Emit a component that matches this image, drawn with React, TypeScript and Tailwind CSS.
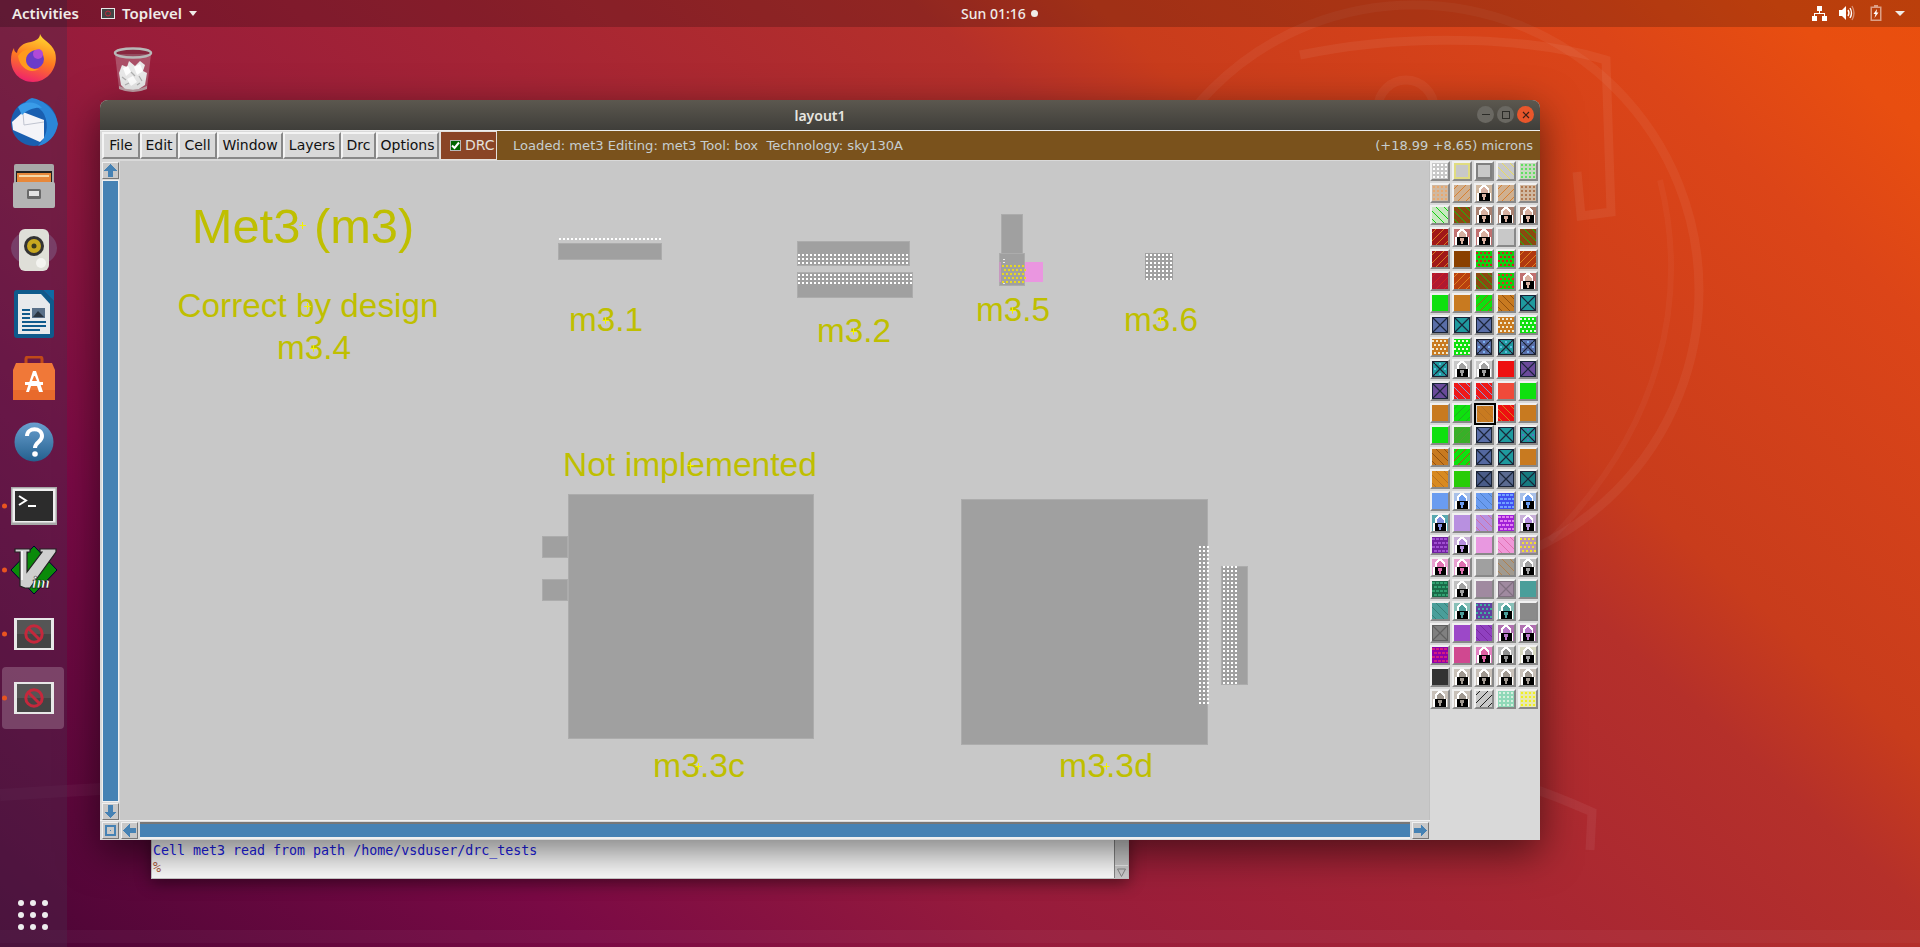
import type { ReactNode } from "react";

const SANS = "font-['Noto_Sans',sans-serif]";
const TK = "font-['DejaVu_Sans',sans-serif]";

type Pat = "plain" | "dots" | "stag" | "diag" | "back" | "x" | "xdots" | "lock" | "outline" | "weave";
type Cell = { bg: string; pat?: Pat; fg?: string; selected?: boolean };

const c = (bg: string, pat: Pat = "plain", fg = "#1a2438"): Cell => ({ bg, pat, fg });
const lock = (bg: string, fg = "#d8b0a0") => c(bg, "lock", fg);

const SLATE = "#5a6ea8";
const TEAL = "#1f9a9e";
const ORANGE = "#c87a20";
const GREEN = "#0ee00e";

const layers: Cell[][] = [
  [c("#c8c8c8", "dots", "#fff"), c("#c8c8c8", "outline", "#e0dc80"), c("#c8c8c8", "outline", "#808080"), c("#c8c8c8", "back", "#e8dc60"), c("#c8d8c0", "dots", "#60e060")],
  [c("#d0b8a0", "dots", "#e8a870"), c("#d0b090", "diag", "#d88030"), lock("#d0b8a0"), c("#d0b090", "diag", "#d88030"), c("#d0b8a0", "dots", "#b07850")],
  [c("#c8e8c0", "back", "#10d010"), c("#8a4a10", "back", "#10c010"), lock("#a88070"), lock("#a88070"), lock("#a88070")],
  [c("#a01818", "diag", "#d87820"), lock("#c07070"), lock("#c07070"), c("#c8c8c8"), c("#8a4a10", "back", "#10c010")],
  [c("#a01818", "diag", "#d87820"), c("#8a4000"), c("#10d010", "stag", "#d02020"), c("#10d010", "stag", "#d02020"), c("#b03810", "diag", "#e08020")],
  [c("#b01830", "diag", "#d02020"), c("#b84010", "diag", "#e08020"), c("#8a4a10", "back", "#10c010"), c("#10d010", "stag", "#e03020"), lock("#c07070")],
  [c(GREEN), c(ORANGE), c(GREEN, "diag", "#a06020"), c(ORANGE, "back", "#905010"), c(TEAL, "x")],
  [c(SLATE, "x"), c(TEAL, "x"), c(SLATE, "x"), c(ORANGE, "stag", "#f0e8d0"), c(GREEN, "stag", "#e0f8e0")],
  [c(ORANGE, "stag", "#f0e8d0"), c(GREEN, "stag", "#f0f8e0"), c(SLATE, "xdots", "#7ab0f0"), c(TEAL, "xdots", "#60b8e0"), c(SLATE, "xdots", "#7ab0f0")],
  [c(TEAL, "xdots", "#60b8e0"), lock("#c8c8c8", "#a0a0a0"), lock("#c8c8c8", "#a0a0a0"), c("#ee1010"), c("#6a4a9a", "x")],
  [c("#6a4a9a", "x"), c("#ee1818", "back", "#80a0e0"), c("#ee1818", "back", "#80a0e0"), c("#f04a3a"), c(GREEN)],
  [c(ORANGE, "plain"), c(GREEN, "diag", "#20b020"), { ...c(ORANGE, "back", "#b87020"), selected: true }, c("#ee1010", "back", "#d88020"), c(ORANGE)],
  [c(GREEN), c("#38b028", "diag", "#50a030"), c(SLATE, "x"), c(TEAL, "x"), c(TEAL, "xdots", "#5a70c0")],
  [c(ORANGE, "back", "#905010"), c(GREEN, "diag", "#c04020"), c("#5468a0", "x"), c(TEAL, "x"), c(ORANGE)],
  [c("#d88a20", "back", "#b87020"), c("#28cc08"), c("#4a5c88", "x"), c("#5a6a90", "x"), c("#167a80", "x")],
  [c("#6a9cf0"), lock("#a8c0e8", "#6a9cf0"), c("#6a9cf0", "back", "#5080c8"), c("#4050f0", "weave", "#70a0ff"), lock("#a8c0e8", "#6a9cf0")],
  [lock("#58a8b0", "#8090e0"), c("#b890e0"), c("#b890e0", "back", "#d070a0"), c("#a020d8", "weave", "#e080f0"), lock("#c8b0d8", "#b890e0")],
  [c("#7020a0", "weave", "#a050d0"), lock("#c8b0d8", "#b890e0"), c("#e898e0"), c("#f098d8", "back", "#e070b0"), c("#b898b0", "stag", "#f0e030")],
  [lock("#e8a0d0", "#e070b0"), lock("#e8a0d0", "#e070b0"), c("#a0a0a0"), c("#a09a90", "back", "#b08050"), lock("#c0c0c0", "#a0a0a0")],
  [c("#1a6a48", "weave", "#30a070"), lock("#c0c0c0", "#a0a0a0"), c("#a08aa0"), c("#a08aa0", "x", "#807080"), c("#4a9e9a")],
  [c("#4a9e9a", "back", "#388078"), lock("#88c0b8", "#4a9e9a"), c("#6040a0", "stag", "#40b0a0"), lock("#88c0b8", "#4a9e9a"), c("#8a8a8a")],
  [c("#808080", "x", "#606060"), c("#9c48c8"), c("#9040c0", "back", "#7a2aa0"), lock("#b070b0", "#b878c8"), lock("#b070b0", "#b878c8")],
  [c("#9000a8", "weave", "#d02080"), c("#d04890"), lock("#e080c0", "#e060a0"), lock("#b8b8b8", "#909090"), lock("#d8d8c0", "#a0a0a0")],
  [c("#333333"), lock("#c8c0b8", "#a09890"), lock("#c8c0b8", "#a09890"), lock("#c8c0b8", "#a09890"), lock("#c8c0b8", "#a09890")],
  [lock("#c8c0b8", "#a09890"), lock("#c8c0b8", "#a09890"), c("#c8c8c8", "diag", "#202020"), c("#90d8b8", "dots", "#d8f0e0"), c("#e8e8b0", "dots", "#f0f020")],
];

function LayerGlyph({ cell, id }: { cell: Cell; id: string }) {
  const fg = cell.fg ?? "#000";
  const pat = cell.pat ?? "plain";
  return (
    <svg width="16" height="16" viewBox="0 0 16 16" shapeRendering="crispEdges" className="block">
      <rect width="16" height="16" fill={cell.bg} />
      {pat === "dots" &&
        [1, 5, 9, 13].flatMap((y) =>
          [1, 5, 9, 13].map((x) => <rect key={`${id}${x}-${y}`} x={x} y={y} width="2" height="2" fill={fg} />),
        )}
      {pat === "stag" &&
        [1, 5, 9, 13].flatMap((y) =>
          [0, 4, 8, 12].map((x) => (
            <rect key={`${id}${x}-${y}`} x={x + (y % 8 === 1 ? 0 : 2)} y={y} width="2" height="2" fill={fg} />
          )),
        )}
      {pat === "weave" &&
        [0, 4, 8, 12].flatMap((y) =>
          [0, 4, 8, 12].map((x) => (
            <rect key={`${id}${x}-${y}`} x={x + (y % 8 === 0 ? 0 : 2)} y={y + 1} width="3" height="2" fill={fg} />
          )),
        )}
      {pat === "diag" && (
        <g shapeRendering="auto" stroke={fg} strokeWidth="1">
          <path d="M-2 6 L6 -2 M-2 14 L14 -2 M4 16 L18 2 M12 16 L18 10" />
        </g>
      )}
      {pat === "back" && (
        <g shapeRendering="auto" stroke={fg} strokeWidth="1">
          <path d="M-2 10 L6 18 M-2 2 L14 18 M4 0 L18 14 M12 0 L18 6" />
        </g>
      )}
      {(pat === "x" || pat === "xdots") && (
        <g>
          {pat === "xdots" &&
            [2, 7, 12].flatMap((y) =>
              [2, 7, 12].map((x) => <rect key={`${id}${x}-${y}`} x={x} y={y} width="2" height="2" fill={fg} />),
            )}
          <path d="M0.5 0.5 L15.5 15.5 M15.5 0.5 L0.5 15.5" stroke={pat === "x" ? fg : "#1a2030"} strokeWidth="1.2" shapeRendering="auto" />
          <rect x="0.5" y="0.5" width="15" height="15" fill="none" stroke={pat === "x" ? fg : "#1a2030"} />
        </g>
      )}
      {pat === "outline" && <rect x="1" y="1" width="14" height="14" fill="none" stroke={fg} strokeWidth="2" />}
      {pat === "lock" && (
        <g>
          <path d="M1 16 V8 H3 V4 L6 0 H10 L13 4 V8 H15 V16 Z" fill="#fff" />
          <path d="M4.5 8 V5 L7 2 H9 L11.5 5 V8 Z" fill={fg} />
          <rect x="2.5" y="8" width="11" height="8" fill="#000" />
          <rect x="6" y="9" width="4" height="3" fill={fg} />
          <rect x="7" y="12" width="2" height="3" fill={fg} />
        </g>
      )}
    </svg>
  );
}

function LayerCell({ cell, id }: { cell: Cell; id: string }) {
  if (cell.selected) {
    return (
      <div className="w-[22px] h-[22px] flex items-center justify-center">
        <div className="border-2 border-black p-px">
          <LayerGlyph cell={cell} id={id} />
        </div>
      </div>
    );
  }
  return (
    <div className="w-[22px] h-[22px] flex items-start justify-start">
      <div className="border-2 border-t-[#f0f0f0] border-l-[#f0f0f0] border-r-[#888888] border-b-[#888888]">
        <LayerGlyph cell={cell} id={id} />
      </div>
    </div>
  );
}

const MENUS = [
  { label: "File", w: "w-[38px]" },
  { label: "Edit", w: "w-[38px]" },
  { label: "Cell", w: "w-[39px]" },
  { label: "Window", w: "w-[66px]" },
  { label: "Layers", w: "w-[58px]" },
  { label: "Drc", w: "w-[35px]" },
  { label: "Options", w: "w-[63px]" },
];

function TkButton({ children, className }: { children: ReactNode; className: string }) {
  return (
    <div className={`h-[27px] ${className} flex items-center justify-center text-[14px] text-[#111] bg-[#d9d9d9] border-2 border-t-[#f4f4f4] border-l-[#f4f4f4] border-r-[#888888] border-b-[#888888] ${TK}`}>
      {children}
    </div>
  );
}

function ScrollBtn({ dir }: { dir: "up" | "down" | "left" | "right" | "box" }) {
  const d = {
    up: "M8 1 L15 8 H11 V15 H5 V8 H1 Z",
    down: "M8 15 L1 8 H5 V1 H11 V8 H15 Z",
    left: "M1 8 L8 1 V5 H15 V11 H8 V15 Z",
    right: "M15 8 L8 1 V5 H1 V11 H8 V15 Z",
    box: "",
  }[dir];
  return (
    <div className="w-[17px] h-[17px] shrink-0 flex items-center justify-center bg-[#c8c8c8] border border-t-[#f0f0f0] border-l-[#f0f0f0] border-r-[#777777] border-b-[#777777]">
      <svg width="15" height="15" viewBox="0 0 16 16" shapeRendering="crispEdges">
        {dir === "box" ? (
          <path fillRule="evenodd" d="M2 2 H14 V14 H2 Z M4 4 V12 H12 V4 Z M7 7 H9 V9 H7 Z" fill="#4682b4" />
        ) : (
          <path d={d} fill="#4682b4" />
        )}
      </svg>
    </div>
  );
}

function Tag({ x, y, size = 33.4, children }: { x: number; y: number; size?: number; children: string }) {
  return (
    <div
      className="absolute -translate-x-1/2 -translate-y-1/2 whitespace-nowrap text-[#bfbf00] font-['Liberation_Sans',sans-serif] leading-none"
      style={{ left: x, top: y, fontSize: size }}
    >
      {children}
      <svg className="absolute left-1/2 top-1/2 -translate-x-1/2 -translate-y-1/2" width="7" height="7" viewBox="0 0 7 7" shapeRendering="crispEdges">
        <path d="M3.5 0 V7 M0 3.5 H7" stroke="#f4f400" />
      </svg>
    </div>
  );
}

// via dots, first dot at x,y, 4px pitch
function Dots({ x, y, w, h, fill = "#ffffff", shift = 0 }: { x: number; y: number; w: number; h: number; fill?: string; shift?: number }) {
  const out: ReactNode[] = [];
  for (let j = 0; j < h; j += 4) {
    const off = shift && (j / 4) % 2 === 1 ? shift : 0;
    for (let i = 0; i < w; i += 4) {
      out.push(<rect key={`${i}-${j}`} x={x + i + off} y={y + j} width={2} height={2} fill={fill} />);
    }
  }
  return <>{out}</>;
}

function Metal({ x, y, w, h }: { x: number; y: number; w: number; h: number }) {
  return <rect x={x + 0.5} y={y + 0.5} width={w - 1} height={h - 1} fill="#a0a0a0" stroke="#acacac" />;
}

// drawn in screen coordinates, moved back by the canvas origin
function LayoutDrawing() {
  return (
    <svg className="absolute inset-0" width="1309" height="660" shapeRendering="crispEdges">
      <g transform="translate(-120 -161)">
        <Metal x={558} y={243} w={104} h={17} />
        <Dots x={559} y={238} w={103} h={4} />

        <Metal x={797} y={241} w={113} h={25} />
        <Metal x={797} y={272} w={116} h={26} />
        <Dots x={798} y={254} w={112} h={12} />
        <Dots x={798} y={274} w={115} h={12} />

        <Metal x={1001} y={214} w={22} h={40} />
        <Metal x={999} y={253} w={26} h={33} />
        <rect x={999} y={262} width={2} height={20} fill="#c898c0" />
        <rect x={1025} y={262} width={18} height={20} fill="#ea96e0" />
        <Dots x={1002} y={265} w={21} h={20} fill="#e8d820" shift={2} />
        <rect x={1003} y={259} width={2} height={1} fill="#e8e8e8" />
        <rect x={1003} y={262} width={2} height={1} fill="#e8e8e8" />
        <rect x={1003} y={283} width={2} height={1} fill="#e8e8e8" />

        <rect x={1145} y={253} width={28} height={27} fill="#a0a0a0" />
        <Dots x={1146} y={254} w={27} h={26} />

        <Metal x={568} y={494} w={246} h={245} />
        <Metal x={542} y={536} w={26} h={22} />
        <Metal x={542} y={579} w={26} h={22} />

        <Metal x={961} y={499} w={247} h={246} />
        <Dots x={1199} y={546} w={9} h={158} />
        <Metal x={1221} y={566} w={27} h={119} />
        <Dots x={1223} y={566} w={14} h={118} />
      </g>
    </svg>
  );
}

function DockIcon({ children, active, dot }: { children: ReactNode; active?: boolean; dot?: boolean }) {
  return (
    <div className="relative h-16 w-full flex items-center justify-center">
      {active && <div className="absolute left-[2px] right-[3px] top-px bottom-px rounded-[4px] bg-white/20" />}
      {dot && <div className="absolute left-[2px] top-1/2 -translate-y-1/2 w-[5px] h-[5px] rounded-full bg-[#e95420]" />}
      <div className="relative">{children}</div>
    </div>
  );
}

function WishIcon() {
  return (
    <svg width="40" height="32" viewBox="0 0 40 32">
      <rect width="40" height="32" fill="#e8e8e8" />
      <rect x="3" y="2" width="34" height="28" fill="#444" />
      <rect x="3" y="2" width="34" height="14" fill="#555" />
      <circle cx="20" cy="16" r="8.2" fill="none" stroke="#c4283c" strokeWidth="3" />
      <path d="M14.5 10.5 L25.5 21.5" stroke="#c4283c" strokeWidth="3" />
    </svg>
  );
}

function Dock() {
  return (
    <div className="absolute left-0 top-0 bottom-0 w-[67px] pt-[26px] flex flex-col bg-[#4a2a4a]/40">
      <DockIcon>
        <svg width="46" height="48" viewBox="0 0 46 48">
          <defs>
            <linearGradient id="ffa" x1="0.6" y1="0" x2="0.3" y2="1">
              <stop offset="0" stopColor="#ffd52e" />
              <stop offset="0.5" stopColor="#ff7a20" />
              <stop offset="1" stopColor="#ee1e70" />
            </linearGradient>
          </defs>
          <path d="M29 0 C31 6 40 8 44 18 C48 32 38 48 22 48 C8 48 0 37 0 26 C0 21 1 17 3 14 C3 17 4 18 6 19 C7 13 12 9 20 8 C24 7 29 5 29 0 Z" fill="url(#ffa)" />
          <circle cx="23" cy="25" r="10" fill="#6a3cc8" />
          <circle cx="27" cy="20" r="5" fill="#b04ad8" />
          <path d="M7 22 C10 16 20 13 28 15 C22 16 15 19 15 26 C15 32 21 36 28 35 C20 40 9 35 7 22 Z" fill="#ff9a1e" />
        </svg>
      </DockIcon>
      <DockIcon>
        <svg width="48" height="48" viewBox="0 0 48 48">
          <circle cx="24" cy="25" r="23" fill="#1a5fb0" />
          <path d="M22 0 C34 2 46 12 48 26 C46 38 38 46 28 48 C36 40 40 28 34 16 C30 9 24 7 14 7 C16 3 18 1 22 0 Z" fill="#2b86d8" />
          <path d="M2 24 L13 14 L34 22 L34 40 L30 44 L3 32 Z" fill="#f4f4f8" />
          <path d="M13 15 L14 27 L34 24" fill="none" stroke="#c0c4d0" strokeWidth="1" />
          <path d="M8 9 C14 3 26 3 32 10 C26 9 18 11 12 17 Z" fill="#3a9ce8" />
        </svg>
      </DockIcon>
      <DockIcon>
        <svg width="42" height="44" viewBox="0 0 42 44">
          <rect x="1" y="0" width="40" height="44" rx="2" fill="#a8a8a8" />
          <rect x="3" y="7" width="36" height="11" fill="#222" />
          <rect x="4" y="9" width="34" height="9" fill="#e8883a" />
          <rect x="6" y="11" width="30" height="2" fill="#f6d8a8" />
          <rect x="0" y="18" width="42" height="26" rx="2" fill="#b4b4b4" />
          <rect x="14" y="25" width="14" height="10" rx="1.5" fill="#6a6a6a" />
          <rect x="16" y="27" width="10" height="5" fill="#e4e4e4" />
        </svg>
      </DockIcon>
      <DockIcon>
        <svg width="48" height="44" viewBox="0 0 48 44">
          <ellipse cx="24" cy="20" rx="23" ry="18" fill="#8a80a8" opacity="0.35" />
          <rect x="9" y="1" width="30" height="42" rx="6" fill="#dfdfd8" />
          <circle cx="24" cy="18" r="10" fill="#333" />
          <circle cx="24" cy="18" r="7" fill="#c8a820" />
          <circle cx="24" cy="18" r="2.5" fill="#3a3a20" />
          <circle cx="31" cy="35" r="5" fill="#f4f4f0" />
        </svg>
      </DockIcon>
      <DockIcon>
        <svg width="40" height="48" viewBox="0 0 40 48">
          <path d="M3 0 H29 L40 11 V45 Q40 48 37 48 H3 Q0 48 0 45 V3 Q0 0 3 0 Z" fill="#0f5a8c" />
          <path d="M4 4 H27 L36 14 V44 H4 Z" fill="#e8eaec" />
          <path d="M29 0 H40 V11 Z" fill="#0f6aa4" />
          <rect x="8" y="19" width="8" height="2" fill="#0f5a8c" />
          <rect x="8" y="23" width="8" height="2" fill="#0f5a8c" />
          <rect x="8" y="27" width="8" height="2" fill="#0f5a8c" />
          <rect x="18" y="18" width="13" height="10" fill="#5a7088" />
          <path d="M19 27 L24 21 L30 27 Z" fill="#2a3440" />
          <rect x="8" y="31" width="24" height="2" fill="#0f5a8c" />
          <rect x="8" y="35" width="24" height="2" fill="#0f5a8c" />
          <rect x="8" y="39" width="18" height="2" fill="#0f5a8c" />
        </svg>
      </DockIcon>
      <DockIcon>
        <svg width="42" height="44" viewBox="0 0 42 44">
          <path d="M13 7 V3 Q13 1 15 1 H27 Q29 1 29 3 V7" fill="none" stroke="#c04a18" strokeWidth="3" />
          <path d="M3 7 H39 L42 14 V44 H0 V14 Z" fill="#f07838" />
          <path d="M0 34 H42 V44 H0 Z" fill="#e86a2c" />
          <path d="M13 36 L20 15 H23 L30 36 H26 L24 30 H18 L16 36 Z M19 25 H24 L22 20 H21 Z" fill="#fff" fillRule="evenodd" />
          <rect x="12" y="26" width="18" height="3" fill="#fff" />
        </svg>
      </DockIcon>
      <DockIcon>
        <svg width="40" height="40" viewBox="0 0 40 40">
          <defs>
            <linearGradient id="hlp" x1="0" y1="0" x2="0" y2="1">
              <stop offset="0" stopColor="#6aa0d0" />
              <stop offset="1" stopColor="#24608e" />
            </linearGradient>
          </defs>
          <circle cx="20" cy="20" r="19.5" fill="url(#hlp)" />
          <path d="M13 14 C13 5 28 5 28 14 C28 20 21 20 21 26" fill="none" stroke="#fff" strokeWidth="4" />
          <circle cx="21" cy="32" r="2.8" fill="#fff" />
        </svg>
      </DockIcon>
      <DockIcon dot>
        <svg width="46" height="38" viewBox="0 0 46 38">
          <rect width="46" height="38" fill="#a8a8a8" />
          <rect x="1.5" y="1.5" width="43" height="34" fill="#f0f0f0" />
          <rect x="4" y="4" width="38" height="30" fill="#2c2c2c" />
          <path d="M8 9 L15 13.5 L8 18" fill="none" stroke="#fff" strokeWidth="2" />
          <rect x="17" y="18" width="8" height="2" fill="#fff" />
        </svg>
      </DockIcon>
      <DockIcon dot>
        <svg width="48" height="48" viewBox="0 0 48 48">
          <path d="M24 0 L47 24 L24 48 L1 24 Z" fill="#0a8a0a" stroke="#003" strokeWidth="1" />
          <path d="M5 3 H20 V6 H17 V26 L32 6 H30 V3 H46 V6 L20 42 H15 L10 40 V6 H5 Z" fill="#cfcfcf" stroke="#222" strokeWidth="1.2" />
          <path d="M12 5 V34" stroke="#fff" strokeWidth="1.5" />
          <text x="22" y="42" fontFamily="'Liberation Serif',serif" fontStyle="italic" fontWeight="700" fontSize="17" fill="#fff" stroke="#000" strokeWidth="0.5">im</text>
        </svg>
      </DockIcon>
      <DockIcon dot>
        <WishIcon />
      </DockIcon>
      <DockIcon dot active>
        <WishIcon />
      </DockIcon>
      <div className="absolute left-[18px] bottom-[17px] grid grid-cols-3 gap-[6px]">
        {Array.from({ length: 9 }).map((_, i) => (
          <div key={i} className="w-[6px] h-[6px] rounded-full bg-[#eeeeee]" />
        ))}
      </div>
    </div>
  );
}

function TopBar() {
  return (
    <div className={`absolute left-0 right-0 top-0 h-[27px] bg-black/20 flex items-center text-[14px] font-medium text-[#f0ece8] ${SANS}`}>
      <span className="ml-3 w-[68px] text-[15px] font-semibold whitespace-nowrap">Activities</span>
      <div className="ml-[21px] flex items-center text-[15px] font-semibold">
        <svg width="14" height="11" viewBox="0 0 14 11">
          <rect width="14" height="11" fill="#e8e8e8" />
          <rect x="1" y="1" width="12" height="9" fill="#444" />
          <circle cx="7" cy="5.5" r="2.5" fill="none" stroke="#c4283c" />
        </svg>
        <span className="ml-[7px] w-[61px]">Toplevel</span>
        <div className="ml-[6px] w-0 h-0 border-x-[4.5px] border-x-transparent border-t-[5px] border-t-[#f0ece8]" />
      </div>
      <div className="absolute left-[961px] flex items-center gap-[5px]">
        <span>Sun 01:16</span>
        <div className="w-[7px] h-[7px] rounded-full bg-[#f0ece8]" />
      </div>
      <div className="absolute left-[1812px] top-[5px] flex items-center">
        <svg width="15" height="16" viewBox="0 0 15 16" shapeRendering="crispEdges">
          <rect x="5" y="0.5" width="5" height="5" fill="#fff" />
          <rect x="0" y="10.5" width="5" height="5" fill="#fff" />
          <rect x="10" y="10.5" width="5" height="5" fill="#fff" />
          <path d="M7 5 V8 M2 11 V8 H12 V11" stroke="#fff" fill="none" />
        </svg>
        <svg className="ml-[12px]" width="16" height="16" viewBox="0 0 16 16">
          <path d="M0 5 H3 L7 1 V15 L3 11 H0 Z" fill="#fff" />
          <path d="M9 5 Q11 8 9 11" stroke="#fff" strokeWidth="1.4" fill="none" />
          <path d="M11 3 Q14 8 11 13" stroke="#fff" strokeWidth="1.4" fill="none" />
          <path d="M13 1 Q17 8 13 15" stroke="#fff" strokeOpacity="0.4" strokeWidth="1.4" fill="none" />
        </svg>
        <svg className="ml-[15px]" width="12" height="16" viewBox="0 0 12 16">
          <path d="M4 0 H8 V1.5 H11.5 V16 H0.5 V1.5 H4 Z M2 3 V14.5 H10 V3 Z" fill="#fff" fillOpacity="0.5" fillRule="evenodd" />
          <path d="M7 4 L3.5 9 H5.5 L4.5 13 L8.5 7.5 H6.5 Z" fill="#fff" />
        </svg>
        <div className="ml-[13px] w-0 h-0 border-x-[5px] border-x-transparent border-t-[5px] border-t-[#f0ece8]" />
      </div>
    </div>
  );
}

function LayoutWindow() {
  return (
    <div className="absolute left-[100px] top-[100px] w-[1440px] h-[740px] flex flex-col rounded-t-[8px] bg-[#d9d9d9] shadow-[0_12px_40px_rgba(0,0,0,0.55)]">
      <div className="relative h-[30px] shrink-0 rounded-t-[8px] bg-gradient-to-b from-[#5c584f] to-[#3f3e3a] flex items-center justify-center">
        <span className={`text-[14px] font-semibold text-[#e8e6e0] ${SANS}`}>layout1</span>
        <div className="absolute right-[6px] top-[6px] flex gap-[3px]">
          <div className="w-[17px] h-[17px] rounded-full bg-[#6a6862] flex items-center justify-center">
            <div className="w-[8px] h-px bg-[#2c2c28]" />
          </div>
          <div className="w-[17px] h-[17px] rounded-full bg-[#6a6862] flex items-center justify-center">
            <div className="w-[8px] h-[8px] border border-[#2c2c28]" />
          </div>
          <div className="w-[17px] h-[17px] rounded-full bg-[#e9562b] flex items-center justify-center">
            <svg width="8" height="8" viewBox="0 0 8 8">
              <path d="M1 1 L7 7 M7 1 L1 7" stroke="#3a2018" strokeWidth="1.2" />
            </svg>
          </div>
        </div>
      </div>
      <div className="h-[31px] shrink-0 flex items-stretch border-t border-t-[#eeeeee] border-b border-b-[#d9d9d9]">
        <div className="flex items-center pl-[2px]">
          {MENUS.map((m) => (
            <TkButton key={m.label} className={m.w}>
              {m.label}
            </TkButton>
          ))}
        </div>
        <div className={`ml-[1px] w-[57px] flex items-center gap-[4px] pl-[9px] bg-[#8a4425] border border-[#e4e0dc] text-[14px] text-[#e4e0dc] ${TK}`}>
          <div className="w-[11px] h-[11px] bg-[#006400] border border-[#b8b8b8] flex items-center justify-center">
            <svg width="9" height="9" viewBox="0 0 9 9">
              <path d="M1 4.5 L3.5 7 L8 1.5" stroke="#fff" strokeWidth="2" fill="none" />
            </svg>
          </div>
          DRC
        </div>
        <div className={`flex-1 flex items-center justify-between pl-[16px] pr-[7px] bg-[#7a521c] text-[13px] text-[#c6ced0] ${TK}`}>
          <span className="whitespace-pre text-[13.1px]">Loaded: met3 Editing: met3 Tool: box  Technology: sky130A</span>
          <span>(+18.99 +8.65) microns</span>
        </div>
      </div>
      <div className="flex-1 flex min-h-0">
        <div className="flex-1 flex flex-col min-w-0">
          <div className="flex-1 flex min-h-0">
            <div className="w-[20px] shrink-0 pl-[2px] pt-[1px] flex flex-col gap-[1px]">
              <ScrollBtn dir="up" />
              <div className="flex-1 w-[17px] bg-[#4682b4] border border-[#f0f0f0]" />
              <ScrollBtn dir="down" />
            </div>
            <div className="relative flex-1 bg-[#c8c8c8] overflow-hidden border-r border-r-[#c0c0c0]">
              <LayoutDrawing />
              <div className="absolute left-[-120px] top-[-161px]">
                <Tag x={303} y={226} size={48.8}>Met3 (m3)</Tag>
                <Tag x={308} y={306} size={33.3}>Correct by design</Tag>
                <Tag x={314} y={348}>m3.4</Tag>
                <Tag x={606} y={320}>m3.1</Tag>
                <Tag x={854} y={331}>m3.2</Tag>
                <Tag x={1013} y={310}>m3.5</Tag>
                <Tag x={1161} y={320}>m3.6</Tag>
                <Tag x={690} y={465} size={33.6}>Not implemented</Tag>
                <Tag x={699} y={766} size={33.8}>m3.3c</Tag>
                <Tag x={1106} y={766} size={33.8}>m3.3d</Tag>
              </div>
            </div>
          </div>
          <div className="h-[20px] shrink-0 pb-px flex items-center gap-[2px] pl-[2px] pr-[1px] border-t border-t-[#f0f0f0]">
            <ScrollBtn dir="box" />
            <ScrollBtn dir="left" />
            <div className="flex-1 h-[17px] bg-[#4682b4] border-t-2 border-t-[#777777] border-b-2 border-b-[#f0f0f0]" />
            <ScrollBtn dir="right" />
          </div>
        </div>
        <div className="w-[110px] shrink-0 grid grid-cols-[repeat(5,22px)] auto-rows-[22px] content-start">
          {layers.flatMap((row, r) =>
            row.map((cell, i) => <LayerCell key={`${r}-${i}`} cell={cell} id={`${r}-${i}-`} />),
          )}
        </div>
      </div>
    </div>
  );
}

function ConsoleWindow() {
  return (
    <div className="absolute left-[151px] top-[832px] w-[978px] h-[47px] flex bg-white border border-[#c8c8c8] shadow-[0_4px_16px_rgba(0,0,0,0.45)]">
      <div className="flex-1 pt-[9px] pl-[1px] font-['DejaVu_Sans_Mono',monospace] text-[13.3px] leading-[17px]">
        <div className="text-[#2020ee]">Cell met3 read from path /home/vsduser/drc_tests</div>
        <div className="text-[#b06040]">%</div>
      </div>
      <div className="w-[14px] bg-[#d0d0d0] border-l border-l-[#888] flex flex-col justify-end">
        <div className="h-[13px] flex items-center justify-center border-t border-[#f0f0f0]">
          <svg width="9" height="9" viewBox="0 0 9 9">
            <path d="M0.5 1 H8.5 L4.5 8.5 Z" fill="none" stroke="#888" />
          </svg>
        </div>
      </div>
    </div>
  );
}

function Wallpaper() {
  return (
    <svg className="absolute inset-0" width="1920" height="947" fill="none">
      <circle cx="1414" cy="290" r="285" stroke="#ffffff" strokeOpacity="0.05" strokeWidth="9" />
      <circle cx="1406" cy="108" r="28" stroke="#ffffff" strokeOpacity="0.05" strokeWidth="9" />
      <path d="M1300 55 C1420 30 1540 40 1606 60 L1611 212 L1581 216 L1577 172" stroke="#ffffff" strokeOpacity="0.06" strokeWidth="9" />
      <path d="M1250 705 L1238 750 Q1420 735 1592 812 L1590 850" stroke="#ffffff" strokeOpacity="0.06" strokeWidth="9" />
      <path d="M1660 180 C1690 300 1660 430 1550 540" stroke="#ffffff" strokeOpacity="0.035" strokeWidth="6" />
      <path d="M0 795 C300 775 500 780 700 790" stroke="#ffffff" strokeOpacity="0.04" strokeWidth="12" />
      <rect x="0" y="930" width="1920" height="13" fill="#ffffff" fillOpacity="0.035" />
    </svg>
  );
}

function TrashIcon() {
  return (
    <svg className="absolute left-[113px] top-[47px]" width="40" height="47" viewBox="0 0 40 47">
      <path d="M2 7 L6 42 Q20 48 34 42 L38 7 Z" fill="#d8c8cc" fillOpacity="0.3" />
      <g fill="#e9e9e9">
        <path d="M6 26 L9 18 L14 20 L16 14 L22 19 L27 14 L32 18 L30 24 L34 26 L32 38 L26 42 L20 43 L12 42 L8 38 Z" />
      </g>
      <g fill="#ffffff">
        <path d="M10 21 L15 19 L18 25 L13 29 Z" />
        <path d="M21 20 L27 17 L30 24 L24 28 Z" />
        <path d="M14 32 L20 29 L24 35 L18 39 Z" />
      </g>
      <path d="M9 30 L13 33 M18 25 L22 29 M26 29 L29 34 M12 38 L16 36 M24 38 L27 36" stroke="#b0b0b0" strokeWidth="1.2" />
      <path d="M6 42 Q20 48 34 42 L34 39 Q20 46 6 39 Z" fill="#c8c0c0" fillOpacity="0.7" />
      <ellipse cx="20" cy="6" rx="18" ry="4.5" stroke="#b8b8b8" strokeWidth="2.5" fill="#604048" fillOpacity="0.3" />
    </svg>
  );
}

export default function App() {
  return (
    <div className="relative w-[1920px] h-[947px] overflow-hidden bg-[linear-gradient(42deg,#4a0535_0%,#7a0a45_20%,#961b3c_35%,#a52435_50%,#b5302a_66%,#c83c1c_72%,#dc4518_88%,#e84e10_95%,#ea4f0e_100%)]">
      <Wallpaper />
      <TrashIcon />
      <ConsoleWindow />
      <LayoutWindow />
      <Dock />
      <TopBar />
    </div>
  );
}
